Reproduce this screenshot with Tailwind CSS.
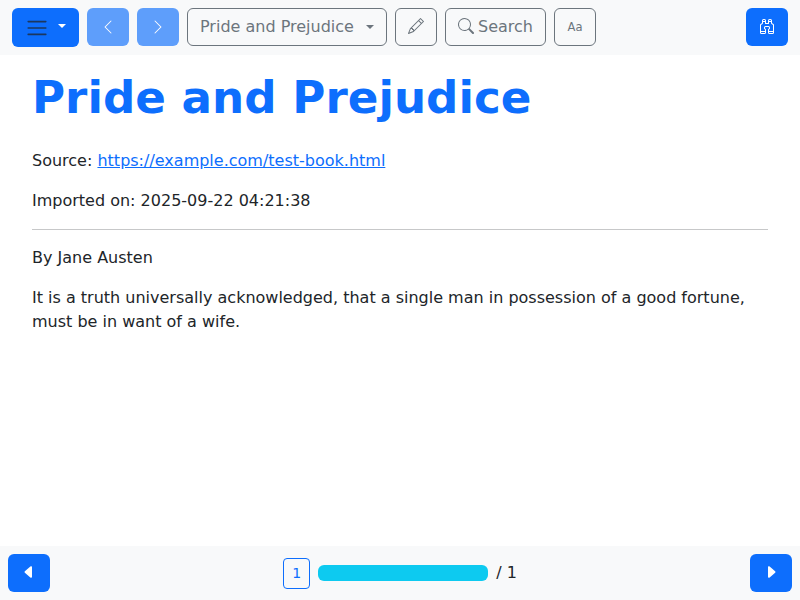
<!DOCTYPE html>
<html lang="en">
<head>
<meta charset="utf-8">
<title>Pride and Prejudice</title>
<script src="https://cdn.jsdelivr.net/npm/@tailwindcss/browser@4"></script>
</head>
<body class="flex h-screen flex-col bg-white font-['DejaVu_Sans',sans-serif] text-base text-[#212529]">
<header class="flex h-[55px] shrink-0 items-start gap-2 bg-[#f8f9fa] px-3 pt-2">
  <button class="flex h-[39px] w-[67px] rounded-md bg-[#0d6efd] pl-[13px] pt-2" aria-label="Menu">
    <svg class="size-6 shrink-0" viewBox="0 0 30 30"><path stroke="rgba(33,37,41,.75)" stroke-linecap="round" stroke-miterlimit="10" stroke-width="2" d="M4 7h22M4 15h22M4 23h22"/></svg>
    <span class="ml-[9px] mt-2 border-x-[4.8px] border-t-[4.8px] border-x-transparent border-t-white"></span>
  </button>
  <button class="flex h-[38px] w-[42px] justify-center rounded-md bg-[#0d6efd] pt-[11px] text-white opacity-65" aria-label="Previous chapter">
    <svg class="size-4" viewBox="0 0 16 16" fill="currentColor"><path d="M11.354 1.646a.5.5 0 0 1 0 .708L5.707 8l5.647 5.646a.5.5 0 0 1-.708.708l-6-6a.5.5 0 0 1 0-.708l6-6a.5.5 0 0 1 .708 0"/></svg>
  </button>
  <button class="flex h-[38px] w-[42px] justify-center rounded-md bg-[#0d6efd] pt-[11px] text-white opacity-65" aria-label="Next chapter">
    <svg class="size-4" viewBox="0 0 16 16" fill="currentColor"><path d="M4.646 1.646a.5.5 0 0 1 .708 0l6 6a.5.5 0 0 1 0 .708l-6 6a.5.5 0 0 1-.708-.708L10.293 8 4.646 2.354a.5.5 0 0 1 0-.708"/></svg>
  </button>
  <button class="flex h-[38px] w-[200px] rounded-md border border-[#6c757d] pl-3 pt-1.5 text-[#6c757d]">
    <span class="whitespace-nowrap">Pride and Prejudice</span>
    <span class="ml-3 mt-[10px] border-x-[4.8px] border-t-[4.8px] border-x-transparent border-t-[#6c757d]"></span>
  </button>
  <button class="flex h-[38px] w-[42px] justify-center rounded-md border border-[#6c757d] pt-[9px] text-[#6c757d]" aria-label="Edit">
    <svg class="size-4" viewBox="0 0 16 16" fill="currentColor"><path d="M12.146.146a.5.5 0 0 1 .708 0l3 3a.5.5 0 0 1 0 .708l-10 10a.5.5 0 0 1-.168.11l-5 2a.5.5 0 0 1-.65-.65l2-5a.5.5 0 0 1 .11-.168zM11.207 2.5 13.5 4.793 14.793 3.5 12.5 1.207zm1.586 3L10.5 3.207 4 9.707V10h.5a.5.5 0 0 1 .5.5v.5h.5a.5.5 0 0 1 .5.5v.5h.293zm-9.761 5.175-.106.106-1.528 3.821 3.821-1.528.106-.106A.5.5 0 0 1 5 12.5V12h-.5a.5.5 0 0 1-.5-.5V11h-.5a.5.5 0 0 1-.468-.325"/></svg>
  </button>
  <button class="flex h-[38px] w-[101px] gap-1 rounded-md border border-[#6c757d] pl-3 pt-1.5 text-[#6c757d]">
    <svg class="mt-[3px] size-4 shrink-0" viewBox="0 0 16 16" fill="currentColor"><path d="M11.742 10.344a6.5 6.5 0 1 0-1.397 1.398h-.001q.044.06.098.115l3.85 3.85a1 1 0 0 0 1.415-1.414l-3.85-3.85a1 1 0 0 0-.115-.1zM12 6.5a5.5 5.5 0 1 1-11 0 5.5 5.5 0 0 1 11 0"/></svg>
    <span>Search</span>
  </button>
  <button class="flex h-[38px] w-[42px] items-center justify-center rounded-md border border-[#6c757d] font-['DejaVu_Sans_Condensed','DejaVu_Sans',sans-serif] text-[12.8px] leading-5 text-[#6c757d]">Aa</button>
  <button class="ml-auto flex h-[38px] w-[42px] justify-center rounded-md bg-[#0d6efd] pt-[10px] text-white" aria-label="Find">
    <svg class="size-4" viewBox="0 0 16 16" fill="currentColor"><path d="M3 2.5A1.5 1.5 0 0 1 4.5 1h1A1.5 1.5 0 0 1 7 2.5V5h2V2.5A1.5 1.5 0 0 1 10.5 1h1A1.5 1.5 0 0 1 13 2.5v2.382a.5.5 0 0 0 .276.447l.895.447A1.5 1.5 0 0 1 15 7.118V14.5a1.5 1.5 0 0 1-1.5 1.5h-3A1.5 1.5 0 0 1 9 14.5v-3a.5.5 0 0 1 .146-.354l.854-.853V9.5a.5.5 0 0 0-.5-.5h-3a.5.5 0 0 0-.5.5v.793l.854.853A.5.5 0 0 1 7 11.5v3A1.5 1.5 0 0 1 5.5 16h-3A1.5 1.5 0 0 1 1 14.5V7.118a1.5 1.5 0 0 1 .83-1.342l.894-.447A.5.5 0 0 0 3 4.882zM4.5 2a.5.5 0 0 0-.5.5V3h2v-.5a.5.5 0 0 0-.5-.5zM6 4H4v.882a1.5 1.5 0 0 1-.83 1.342l-.894.447A.5.5 0 0 0 2 7.118V13h4v-1.293l-.854-.853A.5.5 0 0 1 5 10.5v-1A1.5 1.5 0 0 1 6.5 8h3A1.5 1.5 0 0 1 11 9.5v1a.5.5 0 0 1-.146.354l-.854.853V13h4V7.118a.5.5 0 0 0-.276-.447l-.895-.447A1.5 1.5 0 0 1 12 4.882V4h-2v1.5a.5.5 0 0 1-.5.5h-3a.5.5 0 0 1-.5-.5zm4-1h2v-.5a.5.5 0 0 0-.5-.5h-1a.5.5 0 0 0-.5.5zm4 11h-4v.5a.5.5 0 0 0 .5.5h3a.5.5 0 0 0 .5-.5zm-8 0H2v.5a.5.5 0 0 0 .5.5h3a.5.5 0 0 0 .5-.5z"/></svg>
  </button>
</header>
<main class="grow px-8 pt-4">
  <h1 class="mb-6 whitespace-nowrap text-[45.2px] font-bold leading-[54px] text-[#0d6efd]">Pride and Prejudice</h1>
  <p class="mb-4">Source: <a class="text-[#0d6efd] underline" href="#">https://example.com/test-book.html</a></p>
  <p class="mb-4">Imported on: 2025-09-22 04:21:38</p>
  <hr class="mb-4 border-t border-[#212529] opacity-25">
  <p class="mb-4">By Jane Austen</p>
  <p>It is a truth universally acknowledged, that a single man in possession of a good fortune, must be in want of a wife.</p>
</main>
<footer class="flex h-[54px] shrink-0 items-center justify-between bg-[#f8f9fa] px-2">
  <button class="flex h-[38px] w-[42px] justify-center rounded-md bg-[#0d6efd] pt-[10px] text-white" aria-label="Previous page">
    <svg class="size-4" viewBox="0 0 16 16" fill="currentColor"><path d="m3.86 8.753 5.482 4.796c.646.566 1.658.106 1.658-.753V3.204a1 1 0 0 0-1.659-.753l-5.48 4.796a1 1 0 0 0 0 1.506z"/></svg>
  </button>
  <div class="flex items-center gap-2">
    <button class="flex h-[31px] w-[27px] items-center justify-center rounded-sm border border-[#0d6efd] text-sm text-[#0d6efd]">1</button>
    <div class="h-4 w-[170px] rounded-md bg-[#0dcaf0]"></div>
    <span>/ 1</span>
  </div>
  <button class="flex h-[38px] w-[42px] justify-center rounded-md bg-[#0d6efd] pt-[10px] text-white" aria-label="Next page">
    <svg class="size-4" viewBox="0 0 16 16" fill="currentColor"><path d="m12.14 8.753-5.482 4.796c-.646.566-1.658.106-1.658-.753V3.204a1 1 0 0 1 1.659-.753l5.48 4.796a1 1 0 0 1 0 1.506z"/></svg>
  </button>
</footer>
</body>
</html>
